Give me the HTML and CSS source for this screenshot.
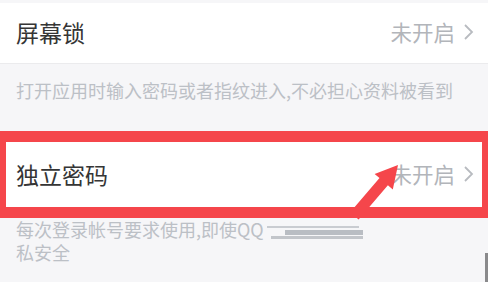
FILE: index.html
```html
<!DOCTYPE html>
<html>
    <head>
        <meta charset = utf-8>
        <meta name = viewport content = 'width = device-width, initial-scale = 1'>
        <title>独立密码</title>

        <link rel="stylesheet" href="styles.css">
    </head>

    <body>
        <div class = page>
            <div class = row>
                <span class = label>屏幕锁</span>
                <span class = value>未开启
                    <svg class = chevron width = 12 height = 18 viewBox = '0 0 12 18'>
                        <polyline points = '3,2 10,9 3,16'/>
                    </svg>
                </span>
            </div>
            <div class = tip>打开应用时输入密码或者指纹进入,不必担心资料被看到</div>

            <div class = 'row marked'>
                <span class = label>独立密码</span>
                <span class = value>未开启
                    <svg class = chevron width = 12 height = 18 viewBox = '0 0 12 18'>
                        <polyline points = '3,2 10,9 3,16'/>
                    </svg>
                </span>
            </div>
            <div class = note>
                <div>每次登录帐号要求使用,即使QQ<span class = hidden></span></div>
                <div>私安全</div>
            </div>

            <svg class = arrow width = 488 height = 282 viewBox = '0 0 488 282'>
                <polygon points = '398,165 392.8,189.5 387.9,185.3 358.6,219.5 350.2,212.3 379.5,178.1 374.6,173.9'/>
            </svg>
        </div>
    </body>
</html>
```

FILE: styles.css
```css
html {
    font-family: "Noto Sans CJK SC", "Noto Sans", sans-serif;
    background: #f6f6f8;
}

body {
    margin: 0;
}

.page {
    position: relative;
    height: 282px;
    overflow: hidden;
    padding-top: 3px;
    box-sizing: border-box;
}

.row {
    height: 58px;
    padding: 0 14px 2px 16px;
    display: flex;
    align-items: center;
    justify-content: space-between;
    background: #fff;
    border-bottom: 1px solid #ebebed;
}

.label {
    font-size: 23px;
    line-height: 28px;
    color: #353535;
}

.value {
    display: flex;
    align-items: center;
    font-size: 21.5px;
    line-height: 28px;
    color: #b2b5ba;
}

.chevron {
    margin-left: 7px;
    fill: none;
    stroke: #b8bbc0;
    stroke-width: 1.8;
}

.tip {
    height: 52px;
    padding: 15px 16px 0;
    font-size: 18px;
    line-height: 22px;
    color: #bcc0c6;
}

.marked {
    height: 63px;
    padding: 0 8px 2px 10px;
    border: solid #f5464b;
    border-width: 11px 6px;
}

.note {
    position: relative;
    height: 64px;
    padding: 0 16px;
    font-size: 18px;
    line-height: 23px;
    color: #bcc0c6;
}

.note::after {
    content: '';
    position: absolute;
    right: 0;
    bottom: 0;
    width: 3px;
    height: 29px;
    background: #8a8a8c;
}

.hidden {
    display: inline-block;
    vertical-align: -2px;
    width: 100px;
    height: 14px;
    margin-left: 3px;
    background:
        linear-gradient(#c9ccd1, #c9ccd1) 0 1px / 92px 2px no-repeat,
        linear-gradient(#b9bdc3, #b9bdc3) 18px 5px / 78px 5px no-repeat,
        linear-gradient(#c2c5ca, #c2c5ca) 4px 11px / 92px 3px no-repeat;
}

.arrow {
    position: absolute;
    top: 0;
    left: 0;
    fill: #f5464b;
    pointer-events: none;
}
```
